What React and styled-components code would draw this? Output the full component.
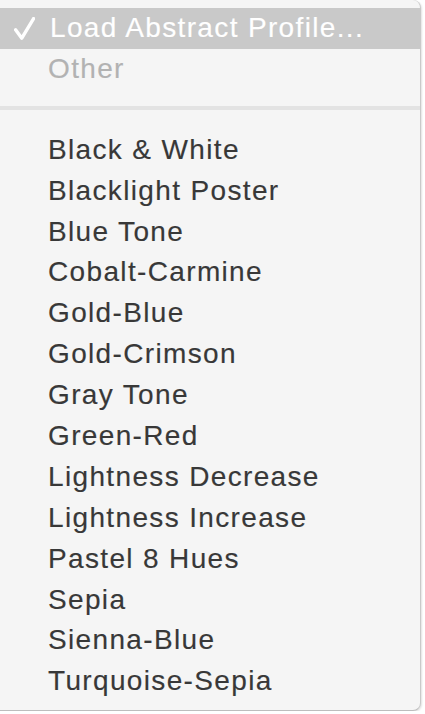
import React from "react";
import styled, { createGlobalStyle } from "styled-components";

const Global = createGlobalStyle`
  html, body { margin: 0; padding: 0; background: #ffffff; }
  body { font-family: "Liberation Sans", Arial, Helvetica, sans-serif; }
`;

const Menu = styled.div`
  width: 421px;
  height: 711px;
  box-sizing: border-box;
  background: #f5f5f5;
  border-right: 1px solid #c9c9c9;
  border-bottom: 1px solid #bdbdbd;
  border-top-right-radius: 8px;
  border-bottom-right-radius: 8px;
  box-shadow: 1px 1px 2px rgba(0, 0, 0, 0.12);
  padding-top: 8px;
  display: flex;
  flex-direction: column;
  overflow: hidden;
`;

const Item = styled.div`
  height: 40.9px;
  flex: none;
  display: flex;
  align-items: center;
  padding-left: ${(p) => (p.$checked ? "14px" : "48px")};
  gap: 15px;
  font-size: 28px;
  letter-spacing: 1.35px;
  line-height: 1;
  white-space: nowrap;
  -webkit-text-stroke: 0.15px currentColor;
  background: ${(p) => (p.$active ? "#c9c9c9" : "transparent")};
  color: ${(p) => (p.$active ? "#ffffff" : p.$disabled ? "#b2b2b2" : "#383838")};
  box-sizing: border-box;
`;

const Separator = styled.div`
  flex: none;
  height: 4px;
  background: #e3e3e3;
  margin: 16px 0 19.5px;
`;

const Check = () => (
  <svg width="21" height="23" viewBox="0 0 21 23" style={{ flex: "none" }}>
    <path
      d="M1.6 12.8 L7.8 21.2 L19.6 1.6"
      fill="none"
      stroke="#ffffff"
      strokeWidth="3.4"
      strokeLinecap="round"
      strokeLinejoin="round"
    />
  </svg>
);

const profiles = [
  "Black & White",
  "Blacklight Poster",
  "Blue Tone",
  "Cobalt-Carmine",
  "Gold-Blue",
  "Gold-Crimson",
  "Gray Tone",
  "Green-Red",
  "Lightness Decrease",
  "Lightness Increase",
  "Pastel 8 Hues",
  "Sepia",
  "Sienna-Blue",
  "Turquoise-Sepia",
];

export default function App() {
  return (
    <>
      <Global />
      <Menu>
        <Item $active $checked>
          <Check />
          <span>Load Abstract Profile...</span>
        </Item>
        <Item $disabled>Other</Item>
        <Separator />
        {profiles.map((p) => (
          <Item key={p}>{p}</Item>
        ))}
      </Menu>
    </>
  );
}
